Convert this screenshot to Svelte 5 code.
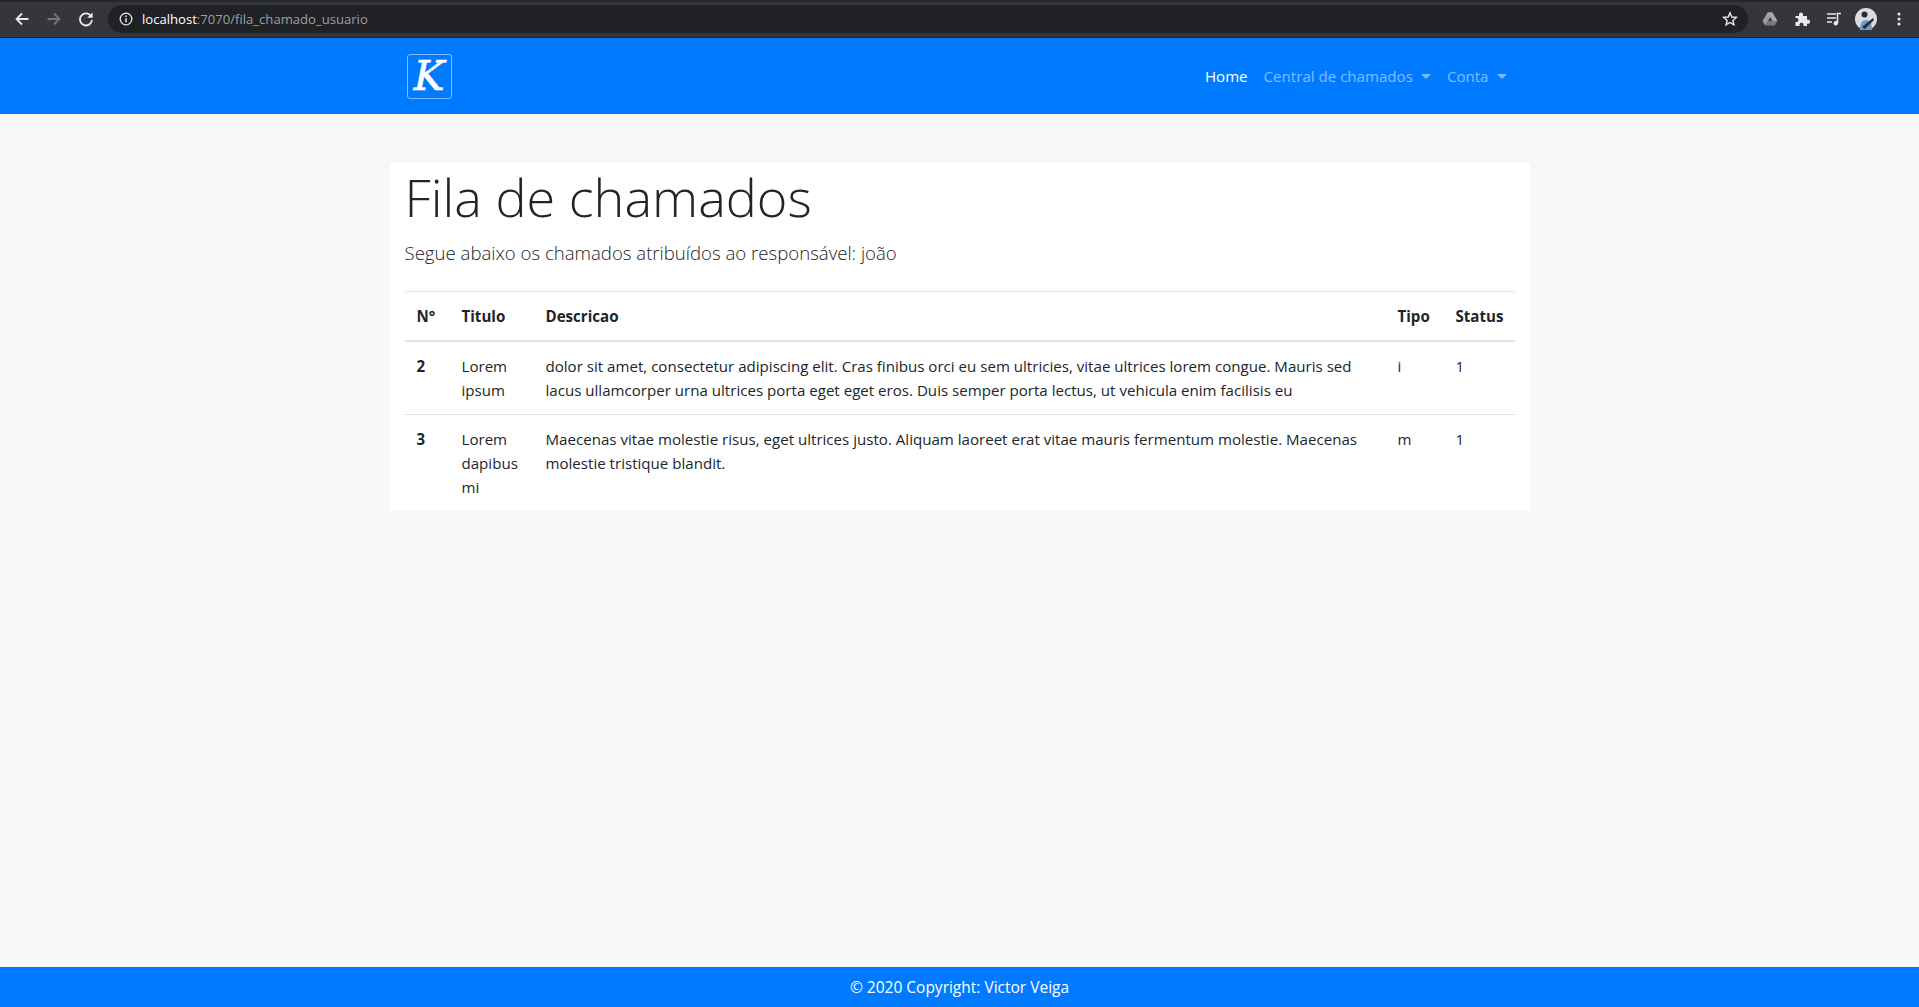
<script>
	const rows = [
		{
			id: 2,
			titulo: ['Lorem', 'ipsum'],
			descricao: [
				'dolor sit amet, consectetur adipiscing elit. Cras finibus orci eu sem ultricies, vitae ultrices lorem congue. Mauris sed',
				'lacus ullamcorper urna ultrices porta eget eget eros. Duis semper porta lectus, ut vehicula enim facilisis eu'
			],
			tipo: 'i',
			status: 1
		},
		{
			id: 3,
			titulo: ['Lorem', 'dapibus', 'mi'],
			descricao: [
				'Maecenas vitae molestie risus, eget ultrices justo. Aliquam laoreet erat vitae mauris fermentum molestie. Maecenas',
				'molestie tristique blandit.'
			],
			tipo: 'm',
			status: 1
		}
	]
</script>

<div class="page">
	<header class="browser">
		<div class="browserStrip"></div>
		<div class="browserBar">
			<svg class="navIcon" viewBox="0 0 16 16"><path d="M14.5 8H2.5M8 2.500 2.500 8 8 13.500" fill="none" stroke="#e8eaed" stroke-width="1.800"/></svg>
			<svg class="navIcon" viewBox="0 0 16 16"><path d="M1.500 8h12M8 2.500 13.500 8 8 13.500" fill="none" stroke="#74767a" stroke-width="1.800"/></svg>
			<svg class="navIcon" viewBox="0 0 16 16"><path d="M13.200 5.400A6 6 0 1 0 14 9" fill="none" stroke="#e8eaed" stroke-width="1.800"/><path d="M14.600 1.400v5.400H9.200z" fill="#e8eaed"/></svg>
			<div class="omnibox">
				<svg class="infoIcon" viewBox="0 0 14 14"><circle cx="7" cy="7" r="5.800" fill="none" stroke="#e8eaed" stroke-width="1.300"/><path d="M7 6.200v4M7 3.600v1.400" stroke="#e8eaed" stroke-width="1.500"/></svg>
				<span class="url"><b>localhost</b>:7070/fila_chamado_usuario</span>
				<svg class="starIcon" viewBox="0 0 16 16"><path d="M8 1.800 9.800 6l4.500.4-3.400 3 1 4.400L8 11.500l-3.900 2.300 1-4.400-3.400-3L6.200 6z" fill="none" stroke="#e8eaed" stroke-width="1.400"/></svg>
			</div>
			<div class="extensions">
				<svg class="extIcon" viewBox="0 0 16 16">
					<path d="M5.500 1.500h5L8 6.500 5.500 11 3.200 14.500 0.500 10z" fill="#9a9b9e"/>
					<path d="M5.500 1.500h5l5 8.500h-5z" fill="#a6a7a9"/>
					<path d="M3.500 14.500 6 10h9.500l-2.800 4.500z" fill="#77787b"/>
				</svg>
				<svg class="extIcon" viewBox="0 0 16 16"><path d="M1.500 5H5V3.500a2 2 0 0 1 4 0V5h4v3.700h1.200a2 2 0 0 1 0 4H13V15H9.500v-1.300a2 2 0 0 0-4 0V15h-4v-4h1a2 2 0 0 0 0-4h-1z" fill="#e8eaed"/></svg>
				<svg class="extIcon" viewBox="0 0 16 16"><path d="M1 3h9M1 7h9M1 11h5" stroke="#e8eaed" stroke-width="1.500"/><path d="M11.500 12V2.500H15" fill="none" stroke="#e8eaed" stroke-width="1.500"/><circle cx="9.800" cy="12.300" r="2.200" fill="#e8eaed"/></svg>
				<svg class="avatar" viewBox="0 0 22 22">
					<circle cx="11" cy="11" r="11" fill="#dcdde0"/>
					<path d="M5 22c0-7 2-10 6-10s6 3 6 10z" fill="#6f9cc4"/>
					<circle cx="9.500" cy="6.500" r="3" fill="#2e2b2b"/>
					<path d="M7 19 18 10l1 2-9 9z" fill="#26303a"/>
				</svg>
				<svg class="dots" viewBox="0 0 4 16"><circle cx="2" cy="3" r="1.500"/><circle cx="2" cy="8" r="1.500"/><circle cx="2" cy="13" r="1.500"/></svg>
			</div>
		</div>
	</header>

	<nav class="navbar">
		<div class="navInner">
			<a class="brand" href="#home"><span>K</span></a>
			<ul class="navLinks">
				<li class="active">Home</li>
				<li class="dropdown">Central de chamados</li>
				<li class="dropdown">Conta</li>
			</ul>
		</div>
	</nav>

	<main class="content">
		<section class="panel">
			<h1>Fila de chamados</h1>
			<p class="lead">Segue abaixo os chamados atribuídos ao responsável: joão</p>
			<table>
				<thead>
					<tr>
						<th class="colId">N°</th>
						<th class="colTitulo">Titulo</th>
						<th>Descricao</th>
						<th class="colTipo">Tipo</th>
						<th class="colStatus">Status</th>
					</tr>
				</thead>
				<tbody>
					{#each rows as row}
						<tr>
							<th>{row.id}</th>
							<td>{#each row.titulo as line}<div>{line}</div>{/each}</td>
							<td>{#each row.descricao as line}<div class="nowrap">{line}</div>{/each}</td>
							<td>{row.tipo}</td>
							<td>{row.status}</td>
						</tr>
					{/each}
				</tbody>
			</table>
		</section>
	</main>

	<footer>© 2020 Copyright: Victor Veiga</footer>
</div>

<style>
	:global(body) {
		margin: 0;
		background: #f8f8f8;
		color: #212529;
		font-family: "Open Sans", "Noto Sans", sans-serif;
		font-size: 15.1px;
		line-height: 24px;
	}
	.page {
		min-height: 1007px;
		display: flex;
		flex-direction: column;
	}
	.browser {
		height: 38px;
		background: #35363a;
	}
	.browserStrip {
		height: 2px;
		background: #26272a;
	}
	.browserBar {
		height: 36px;
		display: flex;
		align-items: center;
		box-sizing: border-box;
		padding: 0 0 2px 14px;
		border-bottom: 1px solid #202124;
	}
	.navIcon {
		width: 16px;
		height: 16px;
		margin-right: 16px;
		flex: none;
	}
	.omnibox {
		flex: 1;
		height: 28px;
		margin-left: -2px;
		border-radius: 14px;
		background: #202124;
		display: flex;
		align-items: center;
		padding: 0 10px 0 11px;
	}
	.infoIcon {
		width: 14px;
		height: 14px;
		margin-right: 9px;
	}
	.url {
		flex: 1;
		font-size: 13.1px;
		color: #9aa0a6;
	}
	.url b {
		font-weight: 400;
		color: #fff;
	}
	.starIcon {
		width: 16px;
		height: 16px;
	}
	.extensions {
		width: 171px;
		flex: none;
		display: flex;
		align-items: center;
		padding-left: 14px;
		box-sizing: border-box;
	}
	.extIcon {
		width: 16px;
		height: 16px;
		margin-right: 16px;
	}
	.avatar {
		width: 22px;
		height: 22px;
		margin-left: -3px;
	}
	.dots {
		width: 4px;
		height: 16px;
		margin-left: 20px;
		fill: #e8eaed;
	}
	.navbar {
		height: 76px;
		background: #007bff;
	}
	.navInner {
		width: 1110px;
		height: 100%;
		margin: 0 auto;
		display: flex;
		align-items: center;
		justify-content: space-between;
	}
	.brand {
		width: 43px;
		height: 43px;
		margin-left: 2px;
		border: 1px solid rgba(255, 255, 255, 0.5);
		border-radius: 3px;
		display: flex;
		align-items: center;
		justify-content: center;
		text-decoration: none;
	}
	.brand span {
		font-family: "DejaVu Serif", serif;
		font-weight: 400;
		font-style: italic;
		font-size: 41px;
		line-height: 1;
		color: #fff;
		-webkit-text-stroke: 0.7px #fff;
	}
	.navLinks {
		list-style: none;
		display: flex;
		margin: 0;
		padding: 0;
	}
	.navLinks li {
		padding: 0 8px;
		color: rgba(255, 255, 255, 0.5);
	}
	.navLinks li.active {
		color: #fff;
	}
	.dropdown::after {
		content: "";
		display: inline-block;
		margin-left: 8px;
		vertical-align: 3px;
		border-top: 5px solid;
		border-left: 5px solid transparent;
		border-right: 5px solid transparent;
	}
	.content {
		flex: 1;
		padding-top: 49px;
	}
	.panel {
		width: 1110px;
		margin: 0 auto;
		padding: 0 15px;
		background: #fff;
	}
	h1 {
		margin: 0 0 8px;
		font-size: 52.2px;
		line-height: 67px;
		font-weight: 300;
	}
	.lead {
		margin: 0 0 23px;
		font-size: 18.6px;
		line-height: 30px;
		font-weight: 300;
	}
	table {
		width: 100%;
		border-collapse: collapse;
		table-layout: fixed;
	}
	th, td {
		padding: 12px;
		text-align: left;
		vertical-align: top;
		border-top: 1px solid #dee2e6;
	}
	thead th {
		border-bottom: 2px solid #dee2e6;
	}
	tbody tr:first-child > * {
		border-top: 0;
	}
	.colId { width: 21px; }
	.colTitulo { width: 60px; }
	.colTipo { width: 34px; }
	.colStatus { width: 47px; }
	.nowrap {
		white-space: nowrap;
	}
	footer {
		height: 40px;
		background: #007bff;
		color: #fff;
		text-align: center;
		line-height: 40px;
		font-size: 15.5px;
	}
</style>
